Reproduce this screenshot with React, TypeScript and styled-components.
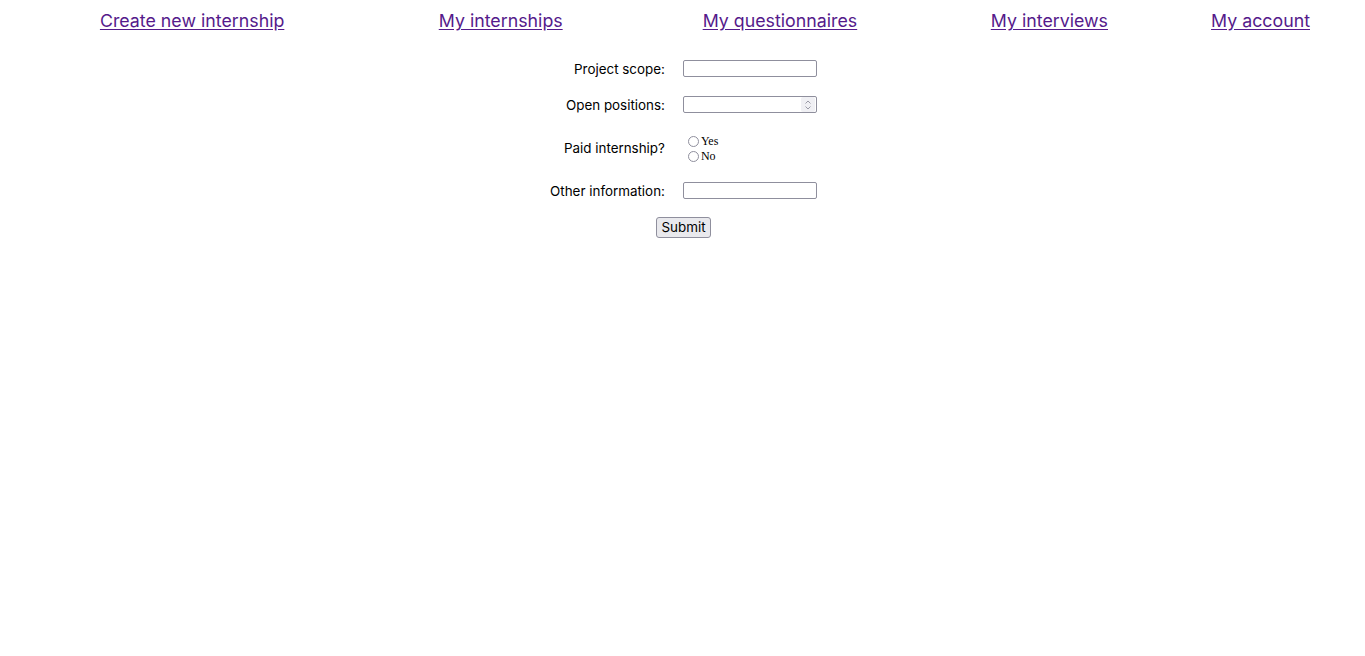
import React from "react";
import styled, { createGlobalStyle } from "styled-components";

const Global = createGlobalStyle`
  body {
    margin: 8px;
    background: #ffffff;
    font-family: Inter, "Noto Sans", sans-serif;
  }
`;

const NavTable = styled.table`
  width: 100%;
  border-collapse: collapse;
  table-layout: fixed;
  margin-top: 2px;
`;

const NavCell = styled.td<{ $w: number }>`
  width: ${(p) => p.$w}%;
  text-align: center;
  padding: 0;
  line-height: 22px;
`;

const NavLink = styled.a`
  color: #551a8b;
  font-size: 17.8px;
  font-family: Inter, sans-serif;
  text-decoration: underline;
  text-underline-offset: 2px;
`;

const FormGrid = styled.form`
  display: grid;
  grid-template-columns: auto auto;
  justify-content: center;
  align-items: center;
  column-gap: 18px;
  row-gap: 19px;
  margin-top: 28px;
  padding-left: 2px;
`;

const Label = styled.label`
  text-align: right;
  font-size: 13.4px;
  color: #000;
  line-height: 19px;
  margin-bottom: -2px;
`;

const TextInput = styled.input`
  display: block;
  width: 134px;
  height: 17px;
  box-sizing: border-box;
  border: 1px solid #8f8f9d;
  border-radius: 2px;
  padding: 1px 2px;
  font-size: 13px;
  background: #fff;
  appearance: none;
  margin: 0;
  &::-webkit-inner-spin-button,
  &::-webkit-outer-spin-button {
    -webkit-appearance: none;
    margin: 0;
  }
`;

const NumberWrap = styled.div`
  position: relative;
  width: 134px;
  height: 17px;
`;

const Spinner = styled.div`
  position: absolute;
  top: 1px;
  right: 2px;
  width: 14px;
  height: 15px;
  background: #f0f0f4;
  border-radius: 2px;
  display: flex;
  align-items: center;
  justify-content: center;
  pointer-events: none;
`;

const RadioGroup = styled.div`
  display: flex;
  flex-direction: column;
  font-family: "Liberation Serif", serif;
  font-size: 12px;
  margin: 2px 0 -1px 0;
`;

const RadioLabel = styled.label`
  display: flex;
  align-items: center;
  line-height: 15px;
  color: #000;
`;

const Radio = styled.input`
  appearance: none;
  width: 11px;
  height: 11px;
  box-sizing: border-box;
  border: 1px solid #8f8f9d;
  border-radius: 50%;
  background: #fff;
  margin: 0 2px 0 5px;
`;

const SubmitRow = styled.div`
  grid-column: 1 / span 2;
  display: flex;
  justify-content: center;
  margin-top: -1px;
`;

const SubmitButton = styled.button`
  font-family: Inter, sans-serif;
  font-size: 13.4px;
  line-height: 15px;
  padding: 2px 4px;
  background: #e9e9ed;
  border: 1px solid #8f8f9d;
  border-radius: 3px;
  color: #000;
`;

const links = [
  { label: "Create new internship", w: 27.3 },
  { label: "My internships", w: 18.45 },
  { label: "My questionnaires", w: 22.95 },
  { label: "My interviews", w: 17 },
  { label: "My account", w: 14.3 },
];

export default function App() {
  return (
    <>
      <Global />
      <NavTable>
        <tbody>
          <tr>
            {links.map((l) => (
              <NavCell key={l.label} $w={l.w}>
                <NavLink href="#">{l.label}</NavLink>
              </NavCell>
            ))}
          </tr>
        </tbody>
      </NavTable>
      <FormGrid onSubmit={(e) => e.preventDefault()}>
        <Label htmlFor="scope">Project scope:</Label>
        <TextInput id="scope" type="text" />

        <Label htmlFor="positions">Open positions:</Label>
        <NumberWrap>
          <TextInput id="positions" type="number" />
          <Spinner>
            <svg width="8" height="12" viewBox="0 0 8 12" fill="none" stroke="#9a9aa6" strokeWidth="1">
              <path d="M1.5 4.5 L4 2 L6.5 4.5" />
              <path d="M1.5 7.5 L4 10 L6.5 7.5" />
            </svg>
          </Spinner>
        </NumberWrap>

        <Label>Paid internship?</Label>
        <RadioGroup>
          <RadioLabel>
            <Radio type="radio" name="paid" />
            Yes
          </RadioLabel>
          <RadioLabel>
            <Radio type="radio" name="paid" />
            No
          </RadioLabel>
        </RadioGroup>

        <Label htmlFor="other">Other information:</Label>
        <TextInput id="other" type="text" />

        <SubmitRow>
          <SubmitButton type="submit">Submit</SubmitButton>
        </SubmitRow>
      </FormGrid>
    </>
  );
}
